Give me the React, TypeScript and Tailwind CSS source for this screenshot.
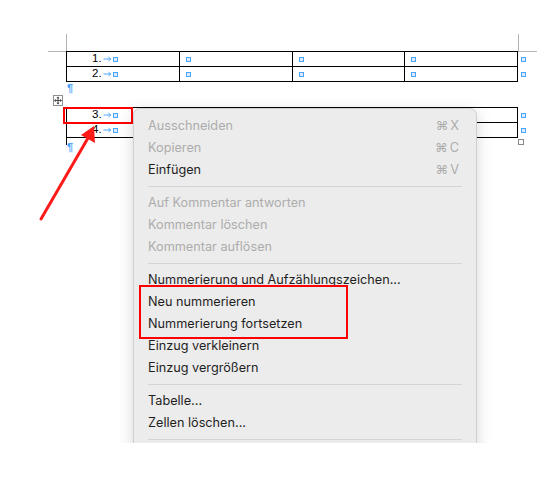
import React from "react";

const MENU: Array<{ label?: string; key?: string; off?: boolean; sep?: boolean }> = [
  { label: "Ausschneiden", key: "⌘X", off: true },
  { label: "Kopieren", key: "⌘C", off: true },
  { label: "Einfügen", key: "⌘V" },
  { sep: true },
  { label: "Auf Kommentar antworten", off: true },
  { label: "Kommentar löschen", off: true },
  { label: "Kommentar auflösen", off: true },
  { sep: true },
  { label: "Nummerierung und Aufzählungszeichen..." },
  { label: "Neu nummerieren" },
  { label: "Nummerierung fortsetzen" },
  { label: "Einzug verkleinern" },
  { label: "Einzug vergrößern" },
  { sep: true },
  { label: "Tabelle..." },
  { label: "Zellen löschen..." },
  { sep: true },
];

function CellMark() {
  return <span className="inline-block w-[5px] h-[5px] border border-[#4aa3ff] bg-[#d8ebff]" />;
}

function TabArrow() {
  return (
    <svg width="9" height="6" viewBox="0 0 9 6" className="ml-[1px] mr-[1px]" fill="none" stroke="#4aa3ff" strokeWidth="1">
      <path d="M0.5 3H7.5M5.5 1L7.8 3L5.5 5" />
    </svg>
  );
}

function Cell({ num, w, first }: { num?: string; w: string; first?: boolean }) {
  return (
    <div className={`${w} h-[15px] border-r border-b border-black flex items-center ${first ? "pl-[25px]" : "pl-[6px]"}`}>
      {num && <span className="text-[11.5px] leading-none text-black">{num}</span>}
      {num && <TabArrow />}
      <CellMark />
    </div>
  );
}

function Table({ rows, trail }: { rows: string[]; trail?: boolean }) {
  return (
    <div className="flex">
      <div className="border-t border-l border-black">
        {rows.map((n) => (
          <div key={n} className="flex">
            <Cell num={n} w="w-[113px]" first />
            <Cell w="w-[113px]" />
            <Cell w="w-[112px]" />
            <Cell w="w-[113px]" />
          </div>
        ))}
      </div>
      <div className="pt-[1px] pl-[3px]">
        {rows.map((n) => (
          <div key={n} className="h-[15px] flex items-center">
            <CellMark />
          </div>
        ))}
        {trail && <div className="w-[6px] h-[6px] border border-[#8a8a8a] bg-white -ml-[3px] mt-[1px]" />}
      </div>
    </div>
  );
}

export default function App() {
  return (
    <div className="relative w-[558px] h-[490px] bg-white overflow-hidden" style={{ fontFamily: "Inter, 'Noto Sans', sans-serif" }}>
      {/* document */}
      <div className="pt-[34px] pl-[48px]" style={{ fontFamily: "'Liberation Sans', Arial, sans-serif" }}>
        <div className="flex w-[489px] justify-between">
          <div className="w-[19px] h-[18px] border-r border-b border-[#b4b4b4]" />
          <div className="w-[19px] h-[18px] border-l border-b border-[#b4b4b4]" />
        </div>
        <div className="pl-[18px] -mt-[1px]">
          <Table rows={["1.", "2."]} />
          <div className="h-[13px] flex items-center pl-[1px] text-[11px] font-bold text-[#4aa3ff] leading-none">¶</div>
          <div className="h-[12px] -ml-[13px]">
            <div className="w-[10px] h-[11px] border border-[#8f8f8f] bg-white flex items-center justify-center">
              <svg width="9" height="9" viewBox="0 0 9 9">
                <path d="M4.5 1.5V7.5M1.5 4.5H7.5" stroke="#333" strokeWidth="1" />
                <polygon points="4.5,0 6.2,2 2.8,2" fill="#333" />
                <polygon points="4.5,9 6.2,7 2.8,7" fill="#333" />
                <polygon points="0,4.5 2,2.8 2,6.2" fill="#333" />
                <polygon points="9,4.5 7,2.8 7,6.2" fill="#333" />
              </svg>
            </div>
          </div>
          <Table rows={["3.", "4."]} trail />
          <div className="h-[10px] flex items-center pl-[1px] -mt-[3px] text-[11px] font-bold text-[#4aa3ff] leading-none">¶</div>
        </div>
      </div>

      {/* red annotation around cell 3 */}
      <div className="absolute left-[63px] top-[107px] w-[70px] h-[17px] border-2 border-[#ff0000]" />

      {/* red arrow */}
      <svg className="absolute left-0 top-0" width="558" height="490" viewBox="0 0 558 490">
        <line x1="41" y1="219" x2="88" y2="138" stroke="#ff1a1a" strokeWidth="3" strokeLinecap="round" />
        <polygon points="94,126 95,143 81,135" fill="#ff1a1a" />
      </svg>

      {/* context menu, cropped at the screenshot edge */}
      <div className="absolute left-0 top-0 w-[558px] h-[443px] overflow-hidden">
        <div className="absolute left-[133px] top-[108px] w-[344px] h-[400px] rounded-[7px] bg-[#ececec] border border-[#cfcfcf] shadow-[0_4px_16px_rgba(0,0,0,0.16)] pt-[6px] text-[12.7px]">
          {MENU.map((m, i) =>
            m.sep ? (
              <div key={i} className="h-[11px] flex items-center px-[14px]">
                <div className="w-full h-px bg-[#d4d4d4]" />
              </div>
            ) : (
              <div key={i} className={`h-[22px] flex items-center justify-between pl-[14px] pr-[15px] ${m.off ? "text-[#acacac]" : "text-[#1f1f1f]"}`}>
                <span>{m.label}</span>
                {m.key && <span className="text-[#acacac] tracking-[2px]">{m.key}</span>}
              </div>
            )
          )}
        </div>
      </div>

      {/* red annotation around renumber items */}
      <div className="absolute left-[139px] top-[285px] w-[209px] h-[54px] border-2 border-[#ff0000]" />
    </div>
  );
}
